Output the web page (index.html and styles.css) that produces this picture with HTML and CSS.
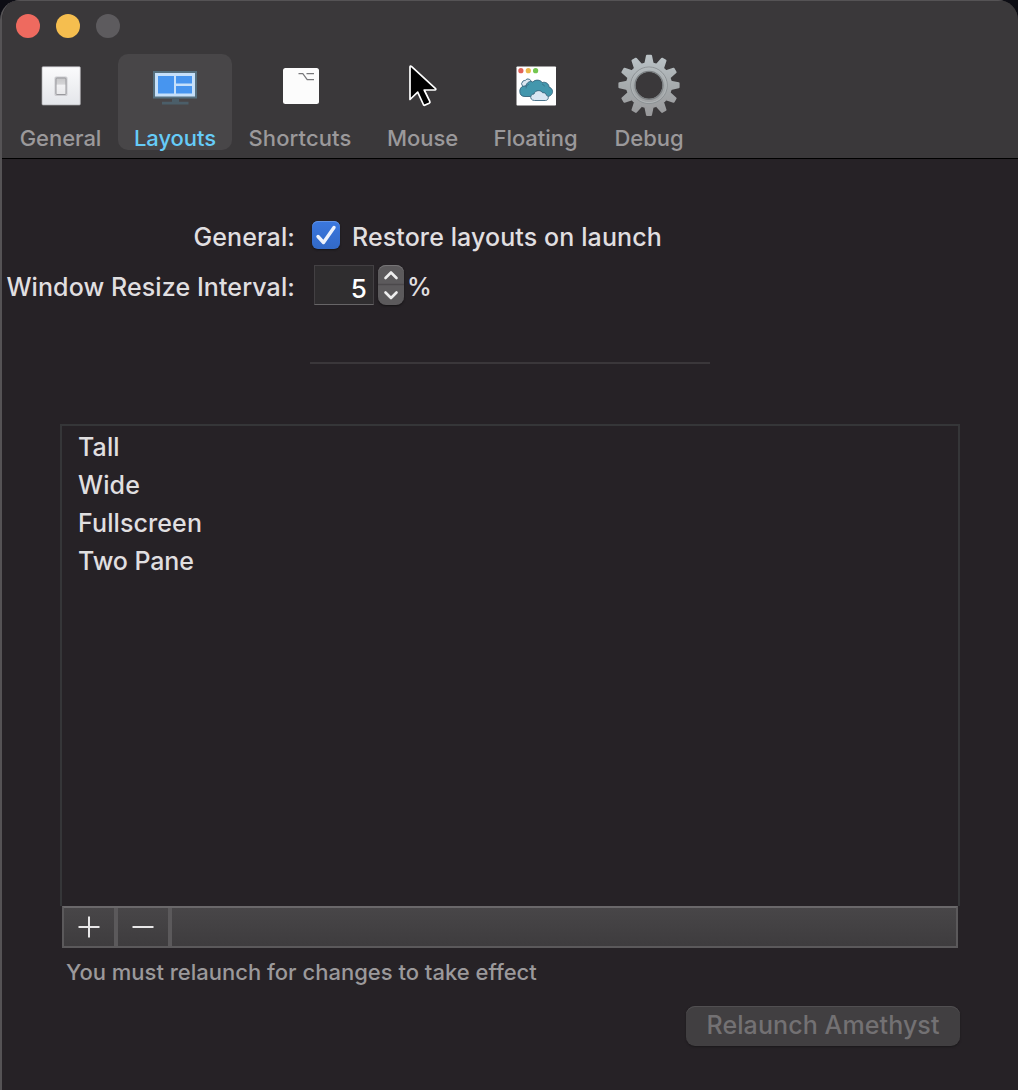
FILE: index.html
```html
<!DOCTYPE html>
<html lang="en">
<head>
<meta charset="utf-8">
<title>Layouts</title>
<link rel="stylesheet" href="styles.css">
</head>
<body>
<div class="window">
  <header class="titlebar">
    <div class="lights"><i class="light red"></i><i class="light yellow"></i><i class="light off"></i></div>
    <nav class="toolbar">
      <div class="tab general">
        <svg width="64" height="64" viewBox="0 0 64 64">
          <defs>
            <linearGradient id="plate" x1="0" y1="0" x2="0" y2="1"><stop offset="0" stop-color="#fbfbfc"/><stop offset="1" stop-color="#e4e6ea"/></linearGradient>
            <linearGradient id="rocker" x1="0" y1="0" x2="0" y2="1"><stop offset="0" stop-color="#c6c6c8"/><stop offset=".38" stop-color="#d5d5d7"/><stop offset=".42" stop-color="#f2f2f4"/><stop offset="1" stop-color="#e8e8ea"/></linearGradient>
          </defs>
          <rect x="13" y="12.700" width="38.300" height="38.300" rx="1" fill="url(#plate)" stroke="#aaa9ad" stroke-width=".7"/>
          <rect x="25.500" y="22.500" width="13" height="19.500" rx="1.500" fill="#ccccd0"/>
          <rect x="27" y="24" width="10" height="16.500" rx="1" fill="url(#rocker)" stroke="#99999d"/>
        </svg>
        <span>General</span>
      </div>
      <div class="tab layouts active">
        <svg width="64" height="64" viewBox="0 0 64 64">
          <rect x="10" y="17" width="44" height="27.500" fill="#56707f"/>
          <path d="M29 44.500h7v3.300h9.500v2.700h-26.500v-2.700H29z" fill="#4b5e69"/>
          <rect x="12" y="19" width="40" height="23.500" fill="#c6e0fa"/>
          <path d="M15 22h16v17.500H15zM33 22h16v7.500H33zM33 32h16v7.500H33z" fill="#4795ef"/>
        </svg>
        <span>Layouts</span>
      </div>
      <div class="tab shortcuts">
        <svg width="64" height="64" viewBox="0 0 64 64">
          <rect x="15" y="14" width="36" height="36" rx="2.500" fill="#fcfcfc"/>
          <path d="M30.500 19.600h4.300l4.400 6.100H46M38.500 19.600H46" fill="none" stroke="#77777a" stroke-width="1.200"/>
        </svg>
        <span>Shortcuts</span>
      </div>
      <div class="tab mouse">
        <svg width="64" height="64" viewBox="0 0 64 64">
          <path d="M19 12.800v32.700l7.700-7.300 5.700 12.300q.6 1.200 1.800.6l3.900-1.900q1.300-.7.700-1.900l-5.600-11.300h10.800q1.500-.6.300-1.700L20.400 12.400Q19.200 11.500 19 12.800z" fill="#000" stroke="#fff" stroke-width="1.700" stroke-linejoin="round"/>
        </svg>
        <span>Mouse</span>
      </div>
      <div class="tab floating">
        <svg width="64" height="64" viewBox="0 0 64 64">
          <rect x="12.500" y="12.500" width="39.500" height="39" rx=".8" fill="#fff"/>
          <circle cx="16.900" cy="16.700" r="2.600" fill="#e26157"/><circle cx="24.300" cy="16.700" r="2.600" fill="#eab949"/><circle cx="31.600" cy="16.700" r="2.600" fill="#74c650"/>
          <g stroke="#37647d" stroke-width=".9" stroke-linejoin="round">
            <path d="M19 33q-3-3.500 0-6 1.300-.8 2.200-.3 1.200-2.700 4-1.500 2.500 1 2.300 4z" fill="#dce7f2"/>
            <path d="M21 42.500c-3.500 0-5.200-2-5.200-5.300 0-3.500 2.700-5.800 6-4.900.7-3.900 4.400-6 7.100-4.200 2.200-2.900 7.700-2.500 9.300.5 3-1.200 6.900 1 6.800 4.500 3.300.8 4.700 5 2.500 7.300-1.100 1.500-2.500 2.100-4.500 2.100z" fill="#4397ad"/>
            <path d="M22 34.500q0-3.500 3-4.300M38 30q2 .5 2.700 2.500" fill="none" stroke-width=".6"/>
            <path d="M30.500 46.500c-5 0-5-6.500-.5-6.500 1-4.300 7.200-4.200 8.500-1.300 2.700-.3 3.500 1 3.900 2.500 3 .8 2.300 5.300-1 5.300z" fill="#dae6f2"/>
          </g>
        </svg>
        <span>Floating</span>
      </div>
      <div class="tab debug">
        <svg width="64" height="64" viewBox="0 0 64 64">
          <defs>
            <linearGradient id="metal" gradientUnits="userSpaceOnUse" x1="0" y1="-31" x2="0" y2="31"><stop offset="0" stop-color="#bcc4c8"/><stop offset=".5" stop-color="#a6abad"/><stop offset="1" stop-color="#98989a"/></linearGradient>
            <mask id="cog" maskUnits="userSpaceOnUse" x="-32" y="-32" width="64" height="64">
              <g fill="#fff">
                <circle r="23"/>
                <path id="teeth" d="M-4.600-22-3-29.700q.2-.9 1-.9h4q.8 0 1 .9l1.600 7.700zM-4.600 22-3 29.700q.2.900 1 .9h4q.8 0 1-.9l1.600-7.700z"/>
                <use href="#teeth" transform="rotate(30)"/><use href="#teeth" transform="rotate(60)"/><use href="#teeth" transform="rotate(90)"/><use href="#teeth" transform="rotate(120)"/><use href="#teeth" transform="rotate(150)"/>
              </g>
              <circle r="13.500" fill="#000"/>
            </mask>
          </defs>
          <g transform="translate(32 31.300)">
            <rect x="-32" y="-32" width="64" height="64" fill="url(#metal)" mask="url(#cog)"/>
            <circle r="18.300" fill="none" stroke="#8d9295" stroke-width="1"/>
            <circle r="17.300" fill="none" stroke="#b8bdbf" stroke-width=".7"/>
            <circle r="14" fill="none" stroke="#7c8083" stroke-width="1.300"/>
          </g>
        </svg>
        <span>Debug</span>
      </div>
    </nav>
  </header>
  <main class="content">
    <div class="form">
      <div class="label row-one"><span class="t-general">General:</span></div>
      <div class="field row-one">
        <svg class="check" width="28" height="28" viewBox="0 0 28 28"><path d="M6 15.500l5.500 6L22 6.500" fill="none" stroke="#eef3fc" stroke-width="3.400" stroke-linecap="round" stroke-linejoin="round"/></svg>
        <span class="t-restore">Restore layouts on launch</span>
      </div>
      <div class="label row-two"><span class="t-interval">Window Resize Interval:</span></div>
      <div class="field row-two">
        <div class="number">5</div>
        <svg class="stepper" width="26" height="40" viewBox="0 0 26 40"><path d="M0 19.500h26" stroke="#4b494b" stroke-width="1.500"/><path d="M7.500 13 13 7.500l5.500 5.500M7.500 27.500 13 33l5.500-5.500" fill="none" stroke="#eee" stroke-width="2.600" stroke-linecap="round" stroke-linejoin="round"/></svg>
        <span class="percent">%</span>
      </div>
    </div>
    <div class="separator"></div>
    <div class="list">
      <div>Tall</div>
      <div>Wide</div>
      <div>Fullscreen</div>
      <div class="t-two">Two Pane</div>
    </div>
    <div class="actions">
      <div class="action"><svg width="22" height="22" viewBox="0 0 22 22"><path d="M.5 11h21M11 .5v21" stroke="#e8e7e8" stroke-width="2"/></svg></div>
      <div class="action"><svg width="22" height="22" viewBox="0 0 22 22"><path d="M.5 11h21" stroke="#e8e7e8" stroke-width="2"/></svg></div>
      <div class="action-fill"></div>
    </div>
    <div class="note"><span>You must relaunch for changes to take effect</span></div>
    <div class="footer"><div class="button"><span>Relaunch Amethyst</span></div></div>
  </main>
</div>
</body>
</html>
```
FILE: styles.css
```css
* { box-sizing: border-box; }
body { margin: 0; background: #0d0d14; font-family: Inter, "Liberation Sans", sans-serif; }
svg { display: block; flex: none; }
.window { width: 1018px; height: 1090px; border-radius: 20px 20px 0 0; overflow: hidden; background: #262226; border-left: 2px solid #555355; }
.titlebar { height: 159px; background: #3a383a; border-bottom: 1px solid #000; border-top: 1px solid #555355; }
.lights { display: flex; gap: 16px; padding: 13px 0 0 14px; height: 53px; }
.light { width: 24px; height: 24px; border-radius: 50%; }
.red { background: #ee6a5f; }
.yellow { background: #f5be4f; }
.off { background: #5d5b5e; }
.toolbar { display: flex; padding-left: 2px; }
.tab { height: 96px; display: flex; flex-direction: column; align-items: center; border-radius: 10px; color: #9b999b; font-size: 22px; line-height: 28px; white-space: nowrap; letter-spacing: -.05px; font-weight: 500; }
.tab span { margin-top: 6px; }
.general { width: 114px; }
.general span { margin-left: -1px; }
.layouts { width: 114px; }
.shortcuts { width: 136px; letter-spacing: .1px; }
.mouse { width: 109px; }
.floating { width: 117px; }
.debug { width: 110px; }
.active { background: #484648; color: #66ccf8; }
.content { display: flex; flex-direction: column; color: #e0dfe0; font-size: 25px; line-height: 38px; font-weight: 450; letter-spacing: .1px; }
.form { display: grid; grid-template-columns: 293px 1fr; grid-template-rows: 50px 50px; padding-top: 53px; white-space: nowrap; }
.label { display: flex; justify-content: flex-end; align-items: center; }
.field { display: flex; align-items: center; padding-left: 17px; }
.row-one { height: 50px; }
.row-two { height: 50px; }
.check { background: linear-gradient(#3b78df, #3269c6); border-radius: 6px; box-shadow: inset 0 1px #6192e4, 0 1px 2px #151315; margin: 0 12px 4px 0; }
.number { width: 60px; height: 40px; margin: -4px 4px 0 2px; padding: 2px 6px 0 0; border: 1px solid #434043; border-bottom-color: #676567; background: #2f2d2f; color: #fff; text-align: right; line-height: 41px; font-size: 26px; }
.stepper { background: #5c5a5c; border-radius: 8px; margin: -4px 3px 0 0; box-shadow: inset 0 1px #777577, 0 1px 2px #151315; }
.separator { width: 400px; height: 2px; margin: 50px 0 0 308px; background: #3a373a; }
.list { margin: 60px 0 0 58px; width: 900px; height: 482px; border: 2px solid #353638; border-bottom: 0; padding: 2px 0 0 16px; }
.t-two { letter-spacing: -.1px; }
.actions { display: flex; gap: 4px; width: 896px; height: 42px; margin-left: 60px; border: 2px solid #5b595b; border-top-color: #6a686a; background: #5b595b; }
.action, .action-fill { background: linear-gradient(#484648, #3e3c3e); }
.action { width: 50px; display: flex; justify-content: center; align-items: center; }
.action-fill { flex: 1; }
.note { margin: 8px 0 0 64px; font-size: 22px; line-height: 32px; color: #9b999b; letter-spacing: 0; }
.footer { display: flex; justify-content: flex-end; margin: 18px 58px 0 0; }
.button { width: 274px; height: 40px; border-radius: 9px; background: #413f41; box-shadow: inset 0 1px #514f51, 0 1px 2px #1a181a; color: #737173; text-align: center; line-height: 39px; white-space: nowrap; }
```
